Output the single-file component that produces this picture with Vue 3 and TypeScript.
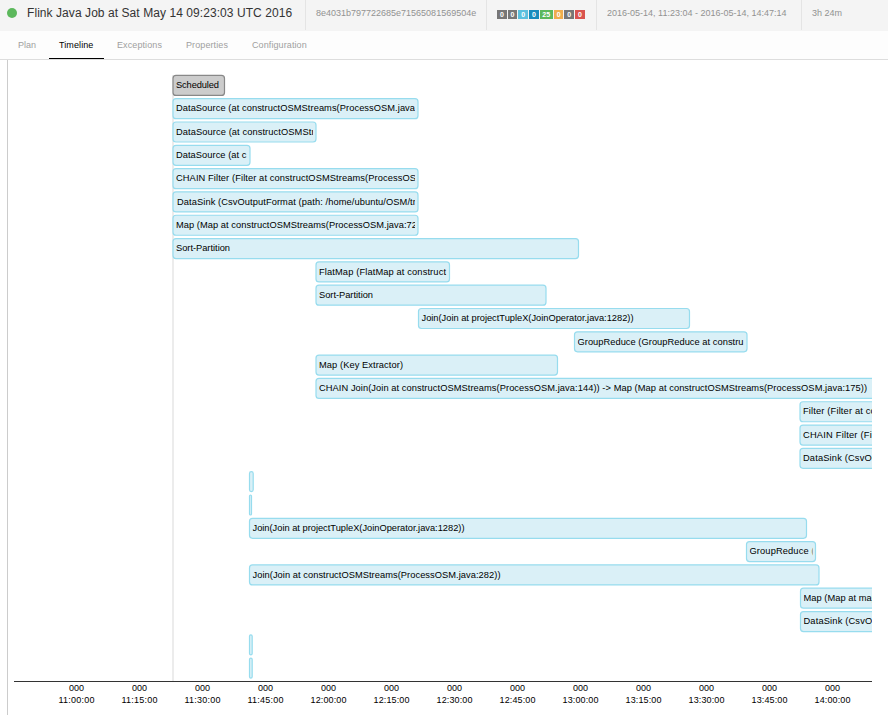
<script setup lang="ts">
interface Badge { count: number; kind: string }
interface Bar { x: number; end: number; label?: string; textWidth?: number; inset?: number; scheduled?: boolean }

const badges: Badge[] = [
  { count: 0, kind: 'gray' },
  { count: 0, kind: 'gray' },
  { count: 0, kind: 'cyan' },
  { count: 0, kind: 'blue' },
  { count: 25, kind: 'green' },
  { count: 0, kind: 'orange' },
  { count: 0, kind: 'gray' },
  { count: 0, kind: 'red' },
]

const tabs = ['Plan', 'Timeline', 'Exceptions', 'Properties', 'Configuration']

const rowHeight = 23.31
const bars: Bar[] = [
  { x: 173, end: 224.5, label: 'Scheduled', textWidth: 43, scheduled: true },
  { x: 173, end: 418, label: 'DataSource (at constructOSMStreams(ProcessOSM.java', textWidth: 239 },
  { x: 173, end: 316, label: 'DataSource (at constructOSMStr', textWidth: 138.5 },
  { x: 173, end: 250, label: 'DataSource (at c', textWidth: 70.5 },
  { x: 173, end: 418, label: 'CHAIN Filter (Filter at constructOSMStreams(ProcessOS', textWidth: 240 },
  { x: 173, end: 418, label: 'DataSink (CsvOutputFormat (path: /home/ubuntu/OSM/tm', textWidth: 243.5, inset: 4 },
  { x: 173, end: 418, label: 'Map (Map at constructOSMStreams(ProcessOSM.java:72', textWidth: 241 },
  { x: 173, end: 578.5, label: 'Sort-Partition', textWidth: 54 },
  { x: 316, end: 449.5, label: 'FlatMap (FlatMap at construct', textWidth: 127 },
  { x: 316, end: 546, label: 'Sort-Partition', textWidth: 54 },
  { x: 418.5, end: 689.5, label: 'Join(Join at projectTupleX(JoinOperator.java:1282))', textWidth: 212 },
  { x: 574.5, end: 747, label: 'GroupReduce (GroupReduce at constru', textWidth: 166 },
  { x: 316, end: 557.5, label: 'Map (Key Extractor)', textWidth: 84 },
  { x: 316, end: 900, label: 'CHAIN Join(Join at constructOSMStreams(ProcessOSM.java:144)) -> Map (Map at constructOSMStreams(ProcessOSM.java:175))', textWidth: 548 },
  { x: 800, end: 900, label: 'Filter (Filter at con', textWidth: 78 },
  { x: 800, end: 900, label: 'CHAIN Filter (Fil', textWidth: 71 },
  { x: 800, end: 900, label: 'DataSink (CsvOu', textWidth: 74 },
  { x: 249.5, end: 253.2 },
  { x: 249.5, end: 251.5 },
  { x: 249.5, end: 806.5, label: 'Join(Join at projectTupleX(JoinOperator.java:1282))', textWidth: 212 },
  { x: 746.5, end: 815.5, label: 'GroupReduce (', textWidth: 65 },
  { x: 249.5, end: 819, label: 'Join(Join at constructOSMStreams(ProcessOSM.java:282))', textWidth: 248 },
  { x: 800.5, end: 900, label: 'Map (Map at map', textWidth: 73.5 },
  { x: 800.5, end: 900, label: 'DataSink (CsvOu', textWidth: 74 },
  { x: 249.5, end: 252.2 },
  { x: 249.5, end: 252.2 },
]

const ticks = [
  '11:00:00', '11:15:00', '11:30:00', '11:45:00', '12:00:00', '12:15:00', '12:30:00',
  '12:45:00', '13:00:00', '13:15:00', '13:30:00', '13:45:00', '14:00:00',
]

const rowTop = (i: number) => 15.4 + i * rowHeight
const textTop = (i: number) => Math.round(28.15 + i * rowHeight)
const tickX = (i: number) => 68.5 + i * 63
</script>

<template>
  <div class="page">
    <header class="job-bar">
      <div class="job-title"><span class="status"></span><span class="name">Flink Java Job at Sat May 14 09:23:03 UTC 2016</span></div>
      <div class="cell job-id"><span>8e4031b797722685e71565081569504e</span></div>
      <div class="cell badges">
        <span v-for="(b, i) in badges" :key="i" class="badge" :class="b.kind">{{ b.count }}</span>
      </div>
      <div class="cell range"><span>2016-05-14, 11:23:04 - 2016-05-14, 14:47:14</span></div>
      <div class="cell duration"><span>3h 24m</span></div>
    </header>
    <nav class="tabs">
      <a v-for="t in tabs" :key="t" :class="[t.toLowerCase(), { active: t === 'Timeline' }]">{{ t }}</a>
    </nav>
    <main class="content">
      <svg class="chart" width="880" height="655" viewBox="0 0 880 655">
        <line class="start" x1="165" x2="165" y1="15" y2="621" />
        <svg x="0" y="0" width="864" height="655">
          <g v-for="(b, i) in bars" :key="i" :class="{ scheduled: b.scheduled }">
            <rect class="bar" :x="b.x - 8" :y="rowTop(i)" :width="b.end - b.x" height="20" :rx="Math.min(3, (b.end - b.x) / 2)" />
            <svg v-if="b.label" :x="b.x - 5" :y="rowTop(i)" :width="b.end - b.x - 6" height="20">
              <text
                class="label"
                :x="b.inset ? 1 : 0"
                :y="textTop(i) - rowTop(i)"
                :textLength="b.textWidth"
              >{{ b.label }}</text>
            </svg>
          </g>
          <line class="axis" x1="6" x2="864" y1="621.5" y2="621.5" />
        </svg>
        <g v-for="(t, i) in ticks" :key="t" class="tick">
          <text :x="tickX(i)" y="631" textLength="15">000</text>
          <text :x="tickX(i)" y="643" textLength="36">{{ t }}</text>
        </g>
      </svg>
    </main>
  </div>
</template>

<style>
body { margin: 0; background: #fff; }
</style>

<style scoped>
.page {
  width: 888px;
  height: 715px;
  overflow: hidden;
  font-family: "Liberation Sans", Arial, sans-serif;
  font-size: 9px;
  color: #929292;
  white-space: nowrap;
}
.job-bar { display: flex; height: 31px; box-sizing: border-box; background: #f4f4f4; line-height: 26px; }
.job-title { display: flex; align-items: center; width: 305px; height: 26px; box-sizing: border-box; padding-left: 7px; color: #333; font-size: 12px; }
.name { letter-spacing: 0.065px; }
.status { width: 10px; height: 10px; margin-right: 10px; border-radius: 50%; background: #5cb85c; }
.cell { height: 30px; box-sizing: border-box; border-left: 1px solid #e4e4e4; padding-left: 10px; }
.job-id { width: 181px; }
.range { width: 205px; }
.duration { flex: 1; }
.badges { display: flex; align-items: flex-start; gap: 1px; width: 110px; padding-top: 10px; }
.badge { width: 9.7px; height: 9px; line-height: 9px; color: #fff; font-size: 7px; font-weight: bold; text-align: center; }
.gray { background: #777; }
.cyan { background: #5bc0de; }
.blue { background: #178bbd; }
.badge.green { width: 13px; }
.green { background: #5cb85c; }
.orange { background: #f0ad4e; }
.red { background: #d9534f; }
.tabs { display: flex; height: 29px; box-sizing: border-box; border-bottom: 1px solid #ddd; background: #fdfdfd; padding-left: 8px; line-height: 28px; color: #a0a0a0; }
.tabs a { height: 28px; box-sizing: border-box; padding: 0 10px; border-bottom: 1px solid transparent; }
.tabs .plan { width: 41px; }
.tabs .timeline { width: 55px; letter-spacing: 0.1px; }
.tabs .exceptions { width: 71px; padding-left: 13px; letter-spacing: 0.1px; }
.tabs .properties { width: 67px; padding-left: 11px; letter-spacing: 0.1px; }
.tabs .configuration { padding-left: 10px; letter-spacing: 0.1px; }
.tabs .active { color: #000; border-bottom-color: #000; }
.content { height: 655px; margin-left: 7px; border-left: 1px solid #ccc; }
.chart { display: block; }
.bar { fill: #daf0f7; stroke: #97dcee; stroke-width: 1.2; }
.scheduled .bar { fill: #ccc; stroke: #888; }
.label { fill: #000; font-size: 9.3px; }
.start { stroke: #e6e6e6; stroke-width: 1.5; }
.axis { stroke: #333; stroke-width: 1; }
.tick text { fill: #000; font-size: 9px; text-anchor: middle; }
</style>
